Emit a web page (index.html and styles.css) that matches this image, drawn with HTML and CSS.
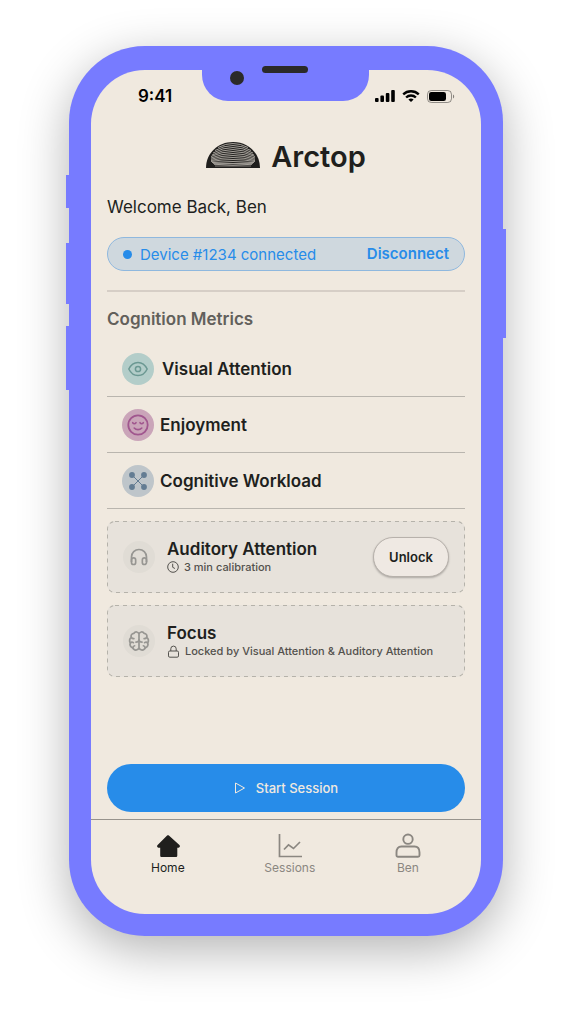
FILE: index.html
```html
<!DOCTYPE html>
<html lang="en">
<head>
<meta charset="utf-8">
<meta name="viewport" content="width=device-width, initial-scale=1">
<title>Arctop</title>
<link rel="stylesheet" href="styles.css">
</head>
<body>
<div class="phone">
  <span class="side-key side-key-mute"></span>
  <span class="side-key side-key-up"></span>
  <span class="side-key side-key-down"></span>
  <span class="side-key side-key-power"></span>
  <div class="notch"><span class="camera"></span><span class="speaker"></span></div>
  <div class="screen">
    <div class="status-bar">
      <span class="time">9:41</span>
      <div class="status-icons">
        <svg width="20" height="12" viewBox="0 0 20 12"><rect y="8" width="3.6" height="4" rx="1"/><rect x="5.4" y="5.5" width="3.6" height="6.5" rx="1"/><rect x="10.8" y="3" width="3.6" height="9" rx="1"/><rect x="16.2" width="3.6" height="12" rx="1"/></svg>
        <svg width="18" height="12" viewBox="0 0 18 12" fill="none" stroke="#000" stroke-width="2.3"><path d="M1.200 4.400a11.200 11.200 0 0 1 15.600 0M4.100 7.500a7 7 0 0 1 9.800 0"/><path d="M6.400 9.500a4 4 0 0 1 5.200 0L9 12z" fill="#000" stroke="none"/></svg>
        <svg width="28" height="13" viewBox="0 0 28 13"><rect x=".5" y=".5" width="24" height="12" rx="3.8" fill="none" stroke="#000" stroke-opacity=".4"/><rect x="2" y="2" width="17" height="9" rx="2.3"/><path d="M26 4.500v4c1.600-.7 1.600-3.300 0-4z" fill-opacity=".45"/></svg>
      </div>
    </div>

    <main class="content">
      <div class="brand">
        <svg width="54" height="26" viewBox="0 0 54 26">
          <path d="M0 26C0 11 12 0 27 0s27 11 27 26z" fill="#201f1d"/>
          <g fill="none" stroke="#f0e9df" stroke-width=".8" stroke-opacity=".8">
            <path d="M12 5.500Q27-2.500 42 5.500"/>
            <path d="M9 8.500Q27-1.500 45 8.500"/>
            <path d="M7 11Q27 0 47 11"/>
            <path d="M6 13Q27 2 48 13"/>
            <path d="M5 14.500Q27 4.500 49 14.500"/>
            <path d="M5 16Q27 7 49 16"/>
            <path d="M5 17.300Q27 9.700 49 17.300"/>
            <path d="M5 18.500Q27 12.500 49 18.500"/>
            <path d="M5 19.500Q27 15.500 49 19.500"/>
            <path d="M6 20.500Q27 18.500 48 20.500"/>
            <path d="M7 21.300Q27 21.700 47 21.300"/>
            <path d="M8 22.300Q27 24 46 22.300"/>
            <path d="M9 24H45" stroke-opacity=".6"/>
          </g>
        </svg>
        <span class="brand-name">Arctop</span>
      </div>

      <p class="welcome">Welcome Back, Ben</p>

      <div class="device">
        <span class="dot"></span>
        <span class="device-name">Device #1234 connected</span>
        <button class="disconnect" type="button">Disconnect</button>
      </div>

      <hr class="divider">

      <h2 class="heading">Cognition Metrics</h2>
      <ul class="metrics">
        <li class="metric metric-wide">
          <span class="badge badge-teal"><svg width="20" height="20" viewBox="0 0 20 20" fill="none" stroke="currentColor" stroke-width="1.500"><path d="M.8 10C2.900 5.700 6.100 3.400 10 3.400s7.100 2.300 9.200 6.600c-2.100 4.300-5.300 6.600-9.200 6.600S2.900 14.300.8 10z"/><circle cx="10" cy="10" r="2.600"/></svg></span>
          Visual Attention
        </li>
        <li class="metric">
          <span class="badge badge-pink"><svg width="22" height="22" viewBox="0 0 22 22" fill="none" stroke="currentColor" stroke-width="1.800" stroke-linecap="round"><circle cx="11" cy="11" r="9.700"/><path d="M5.700 8.700c.9 1.300 2.400 1.300 3.300 0M13 8.700c.9 1.300 2.400 1.300 3.300 0M7.200 14c2 2.200 5.600 2.200 7.600 0" stroke-width="1.600"/></svg></span>
          Enjoyment
        </li>
        <li class="metric">
          <span class="badge badge-slate"><svg width="18" height="18" viewBox="0 0 18 18" fill="currentColor" stroke="currentColor"><path d="M3 3l12 12M15 3L3 15" fill="none"/><g stroke="none"><circle cx="3" cy="3" r="2.900"/><circle cx="15" cy="3" r="2.900"/><circle cx="3" cy="15" r="2.900"/><circle cx="15" cy="15" r="2.900"/></g></svg></span>
          Cognitive Workload
        </li>
      </ul>

      <div class="cards">
        <section class="card">
          <svg class="card-outline" width="100%" height="100%"><rect width="100%" height="100%" rx="8"/></svg>
          <span class="badge badge-muted"><svg width="20" height="20" viewBox="0 0 24 24" fill="none" stroke="currentColor" stroke-width="2" stroke-linejoin="round"><path d="M3 18v-6a9 9 0 0 1 18 0v6"/><path d="M21 18.500a2.500 2.500 0 0 1-5 0v-3a2.500 2.500 0 0 1 5 0zM3 18.500a2.500 2.500 0 0 0 5 0v-3a2.500 2.500 0 0 0-5 0z"/></svg></span>
          <div class="card-text">
            <h3 class="card-title">Auditory Attention</h3>
            <p class="card-note"><svg width="12" height="12" viewBox="0 0 12 12" fill="none" stroke="currentColor"><circle cx="6" cy="6" r="5.300"/><path d="M5.700 2.700v3.600l2.200 1.200"/></svg>3 min calibration</p>
          </div>
          <button class="unlock" type="button">Unlock</button>
        </section>
        <section class="card">
          <svg class="card-outline" width="100%" height="100%"><rect width="100%" height="100%" rx="8"/></svg>
          <span class="badge badge-muted"><svg width="22" height="22" viewBox="0 0 24 24" fill="none" stroke="currentColor" stroke-width="1.900" stroke-linecap="round" stroke-linejoin="round"><path d="M12 4.500a3 3 0 0 0-5.500-.9 3.200 3.200 0 0 0-2.900 4.500A4 4 0 0 0 2.600 14a3.800 3.800 0 0 0 2.600 5.400A3.600 3.600 0 0 0 12 19.500a3.600 3.600 0 0 0 6.800-.1A3.800 3.800 0 0 0 21.400 14a4 4 0 0 0-1-5.900 3.200 3.200 0 0 0-2.900-4.500A3 3 0 0 0 12 4.500v15"/><path d="M8.700 13.200c1.900 0 3-.8 3.300-2.500.3 1.700 1.400 2.500 3.300 2.500M3.600 8.100c.7 1 1.600 1.400 2.800 1.300M20.400 8.100c-.7 1-1.600 1.400-2.800 1.300M2.600 14c1-1 2.200-1 3.300-.2M21.400 14c-1-1-2.200-1-3.300-.2M5.200 19.400c.2-1.200.9-2 2-2.200M18.800 19.400c-.2-1.200-.9-2-2-2.200"/></svg></span>
          <div class="card-text">
            <h3 class="card-title">Focus</h3>
            <p class="card-note"><svg width="13" height="13" viewBox="0 0 13 13" fill="none" stroke="currentColor"><rect x="1.500" y="6" width="10" height="6.200" rx="1.300"/><path d="M3.800 6V3.800a2.700 2.700 0 0 1 5.400 0V6"/></svg>Locked by Visual Attention &amp; Auditory Attention</p>
          </div>
        </section>
      </div>

      <button class="start" type="button"><svg width="12" height="12" viewBox="0 0 12 12" fill="none" stroke="currentColor" stroke-linejoin="round"><path d="M1.500 1v10l9-5z"/></svg>Start Session</button>
    </main>

    <nav class="tabs">
      <a class="tab tab-active" href="#home"><svg width="26" height="26" viewBox="0 0 26 26" fill="currentColor"><path d="M13.900 2.600l10.500 9.500c1 1 .5 2.600-.8 2.600h-1.300v7.700c0 .9-.6 1.600-1.600 1.600H6.800c-1 0-1.600-.7-1.600-1.600v-7.700H3.400c-1.300 0-1.800-1.600-.8-2.600L12.100 2.600c.5-.5 1.300-.5 1.800 0z"/></svg>Home</a>
      <a class="tab" href="#sessions"><svg width="26" height="26" viewBox="0 0 26 26" fill="none" stroke="currentColor" stroke-width="1.700"><path d="M2.500 1v22.500H25M7 16.500l4.500-4.700 5 3.700L23 9"/></svg>Sessions</a>
      <a class="tab" href="#profile"><svg width="26" height="26" viewBox="0 0 26 26" fill="none" stroke="currentColor" stroke-width="1.900"><circle cx="13" cy="6.200" r="4.700"/><path d="M1.500 19.500c0-4 1.600-6 5-6h13c3.400 0 5 2 5 6v2.800c0 .9-.6 1.500-1.500 1.500H3c-.9 0-1.500-.6-1.500-1.500z"/></svg>Ben</a>
    </nav>
  </div>
</div>
</body>
</html>
```
FILE: styles.css
```css
* { box-sizing: border-box; }

body {
  margin: 0;
  min-height: 100vh;
  padding: 46px 69px 86px;
  display: flex;
  background: #fff;
  color: #201f1d;
  font-family: Inter, "Liberation Sans", sans-serif;
}

h2, h3, p, ul { margin: 0; padding: 0; }
button { font: inherit; border: 0; cursor: pointer; }
svg { display: block; flex: none; }

.phone {
  position: relative;
  flex: 1;
  min-width: 0;
  display: flex;
  padding: 24px 22px 22px;
  border-radius: 76px;
  background: #777bff;
  box-shadow: 0 14px 50px rgba(0, 0, 0, .3);
}

.side-key { position: absolute; width: 3px; left: -3px; background: #777bff; }
.side-key-mute { top: 129px; height: 33px; }
.side-key-up { top: 197px; height: 61px; }
.side-key-down { top: 280px; height: 64px; }
.side-key-power { top: 183px; height: 109px; left: auto; right: -3px; }

.notch {
  position: absolute;
  top: 20px;
  left: 50%;
  width: 167px;
  height: 35px;
  margin-left: -84px;
  display: flex;
  align-items: flex-start;
  gap: 18px;
  padding-left: 28px;
  border-radius: 0 0 26px 26px;
  background: #777bff;
}
.camera { width: 14px; height: 14px; margin-top: 5px; border-radius: 50%; background: #2b2a29; }
.speaker { width: 46px; height: 7px; border-radius: 4px; background: #2b2a29; }

.screen {
  flex: 1;
  min-width: 0;
  display: flex;
  flex-direction: column;
  border-radius: 54px;
  background: #f0e9df;
}

.status-bar {
  display: flex;
  align-items: center;
  justify-content: space-between;
  height: 52px;
  padding: 0 26px 0 47px;
  color: #000;
}
.time { font-size: 17px; font-weight: 600; }
.status-icons { display: flex; align-items: center; gap: 7px; }

.content { flex: 1; display: flex; flex-direction: column; padding: 14px 16px 7px; }

.brand { display: flex; align-items: center; justify-content: center; gap: 11px; height: 38px; }
.brand-name { padding-top: 4px; font-size: 29px; line-height: 40px; font-weight: 600; }

.welcome { margin-top: 21px; font-size: 17px; line-height: 24px; }

.device {
  display: flex;
  align-items: center;
  height: 34px;
  margin-top: 18px;
  padding: 0 15px;
  border: 1px solid #8fb8de;
  border-radius: 17px;
  background: #cfd8de;
  color: #278ce9;
  font-size: 15px;
}
.dot { width: 9px; height: 9px; margin-right: 8px; border-radius: 50%; background: #278ce9; }
.disconnect { margin-left: auto; padding: 0 0 2px; background: none; color: inherit; font-weight: 600; }

.divider { width: 100%; height: 2px; margin: 19px 0 0; border: 0; background: #d6cec6; }

.heading { margin-top: 15px; color: #62605b; font-size: 17px; line-height: 24px; font-weight: 600; }

.metrics { margin-top: 10px; list-style: none; }
.metric {
  display: flex;
  align-items: center;
  gap: 6px;
  height: 56px;
  padding-left: 15px;
  border-bottom: 1px solid #b9b5ae;
  font-size: 17px;
  font-weight: 600;
}
.metric-wide { gap: 8px; }

.badge { flex: none; display: grid; place-items: center; width: 32px; height: 32px; border-radius: 50%; }
.badge-teal { background: #b3cdc9; color: #6b9892; }
.badge-pink { background: #caa5b9; color: #a0568e; }
.badge-slate { background: #bec5ca; color: #637c93; }
.badge-muted { background: #e0dcd5; color: #979692; }

.cards { display: flex; flex-direction: column; gap: 12px; margin-top: 12px; }
.card {
  position: relative;
  display: flex;
  align-items: center;
  gap: 12px;
  height: 72px;
  padding: 0 16px;
  border-radius: 8px;
  background: #e7e2db;
}
.card-outline { position: absolute; inset: 0; overflow: hidden; border-radius: 8px; }
.card-outline rect { fill: none; stroke: #b5b2aa; stroke-width: 2; stroke-dasharray: 4 4; }
.card-text { flex: 1; min-width: 0; }
.card-title { font-size: 17px; line-height: 20px; font-weight: 600; }
.card-note {
  display: flex;
  align-items: center;
  gap: 5px;
  color: #53514d;
  font-size: 11px;
  line-height: 16px;
  font-weight: 500;
  white-space: nowrap;
}

.unlock {
  position: relative;
  width: 76px;
  height: 40px;
  padding: 0;
  border: 1px solid #b7b1ab;
  border-radius: 20px;
  background: #efe9e3;
  box-shadow: 0 1px 2px rgba(0, 0, 0, .25);
  color: #201f1d;
  font-size: 13px;
  font-weight: 600;
}

.start {
  display: flex;
  align-items: center;
  justify-content: center;
  gap: 10px;
  height: 48px;
  margin-top: auto;
  border-radius: 24px;
  background: #278ce9;
  color: #f0e9df;
  font-size: 13px;
  font-weight: 500;
}

.tabs {
  display: flex;
  justify-content: space-between;
  height: 95px;
  padding: 13px 60px 0;
  border-top: 1px solid #97938c;
}
.tab {
  display: flex;
  flex-direction: column;
  align-items: center;
  gap: 1px;
  color: #8b8781;
  font-size: 12px;
  line-height: 16px;
  text-decoration: none;
}
.tab-active { color: #201f1d; }
```
